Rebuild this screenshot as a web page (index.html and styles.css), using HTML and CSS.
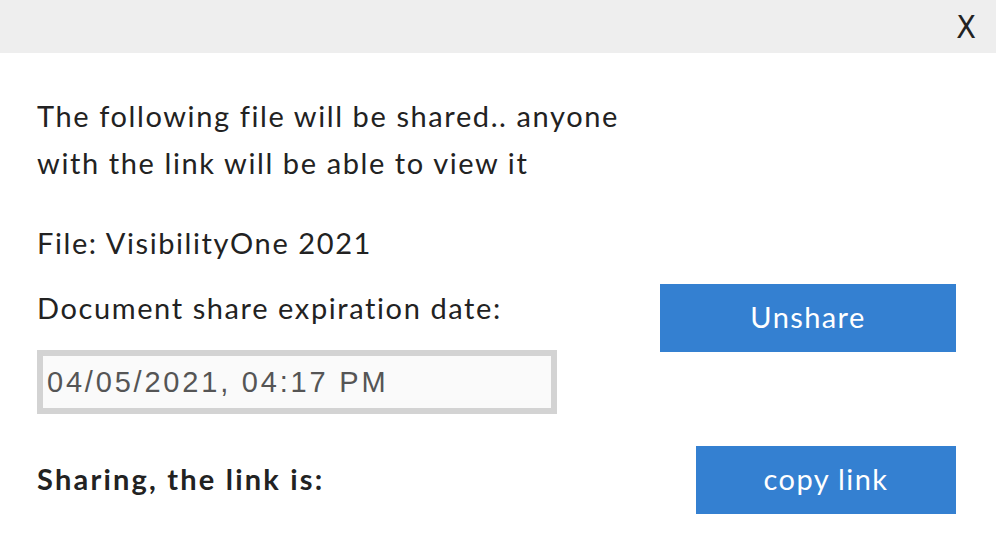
FILE: index.html
```html
<!DOCTYPE html>
<html>
<head>
<meta charset="utf-8">
<link rel="stylesheet" href="styles.css">
</head>
<body>
<div class="dialog">
  <div class="titlebar"><span class="close">X</span></div>
  <div class="content">
    <p class="intro">The following file will be shared.. anyone<br>with the link will be able to view it</p>
    <p class="file">File: VisibilityOne 2021</p>
    <div class="row expire-row">
      <div class="expire">
        <p class="label">Document share expiration date:</p>
        <input class="date" type="text" value="04/05/2021, 04:17 PM" readonly>
      </div>
      <button class="btn unshare">Unshare</button>
    </div>
    <div class="row link-row">
      <p class="sharing">Sharing, the link is:</p>
      <button class="btn copy">copy link</button>
    </div>
  </div>
</div>
</body>
</html>
```

FILE: styles.css
```css
* { box-sizing: border-box; }
html, body { margin: 0; padding: 0; background: #fff; }
body {
  font-family: Lato, "Open Sans", sans-serif;
  color: #222;
  width: 996px;
  height: 554px;
  overflow: hidden;
}
.titlebar {
  height: 53px;
  background: #eeeeee;
  display: flex;
  justify-content: flex-end;
  align-items: center;
  padding-right: 20px;
}
.close {
  font-family: "DejaVu Sans Condensed", "Liberation Sans Narrow", sans-serif;
  font-size: 32px;
  color: #222;
  line-height: 1;
}
.content {
  padding: 0 40px 0 37px;
}
p { margin: 0; }
.intro, .file, .label, .sharing {
  font-size: 29px;
  letter-spacing: 1.6px;
}
.intro {
  line-height: 47px;
  padding-top: 39px;
}
.file {
  line-height: 40px;
  margin-top: 37px;
}
.row {
  display: flex;
  justify-content: space-between;
}
.expire-row { margin-top: 25px; }
.label {
  line-height: 40px;
}
.date {
  display: block;
  margin-top: 22px;
  width: 520px;
  height: 64px;
  border: 6px solid #d3d3d3;
  background: #fafafa;
  font-family: "Liberation Sans", Arial, sans-serif;
  font-size: 29px;
  letter-spacing: 2.8px;
  color: #555;
  padding: 0 0 0 4px;
  outline: none;
}
.btn {
  border: none;
  background: #3480d1;
  color: #fff;
  font-family: Lato, "Open Sans", sans-serif;
  font-size: 29px;
  letter-spacing: 1.4px;
  height: 68px;
  padding: 0 0 3px;
}
.unshare { width: 296px; margin-top: -4px; }
.link-row { margin-top: 32px; align-items: center; }
.sharing { font-weight: 700; letter-spacing: 2.2px; padding-bottom: 4px; }
.copy { width: 260px; }
```
